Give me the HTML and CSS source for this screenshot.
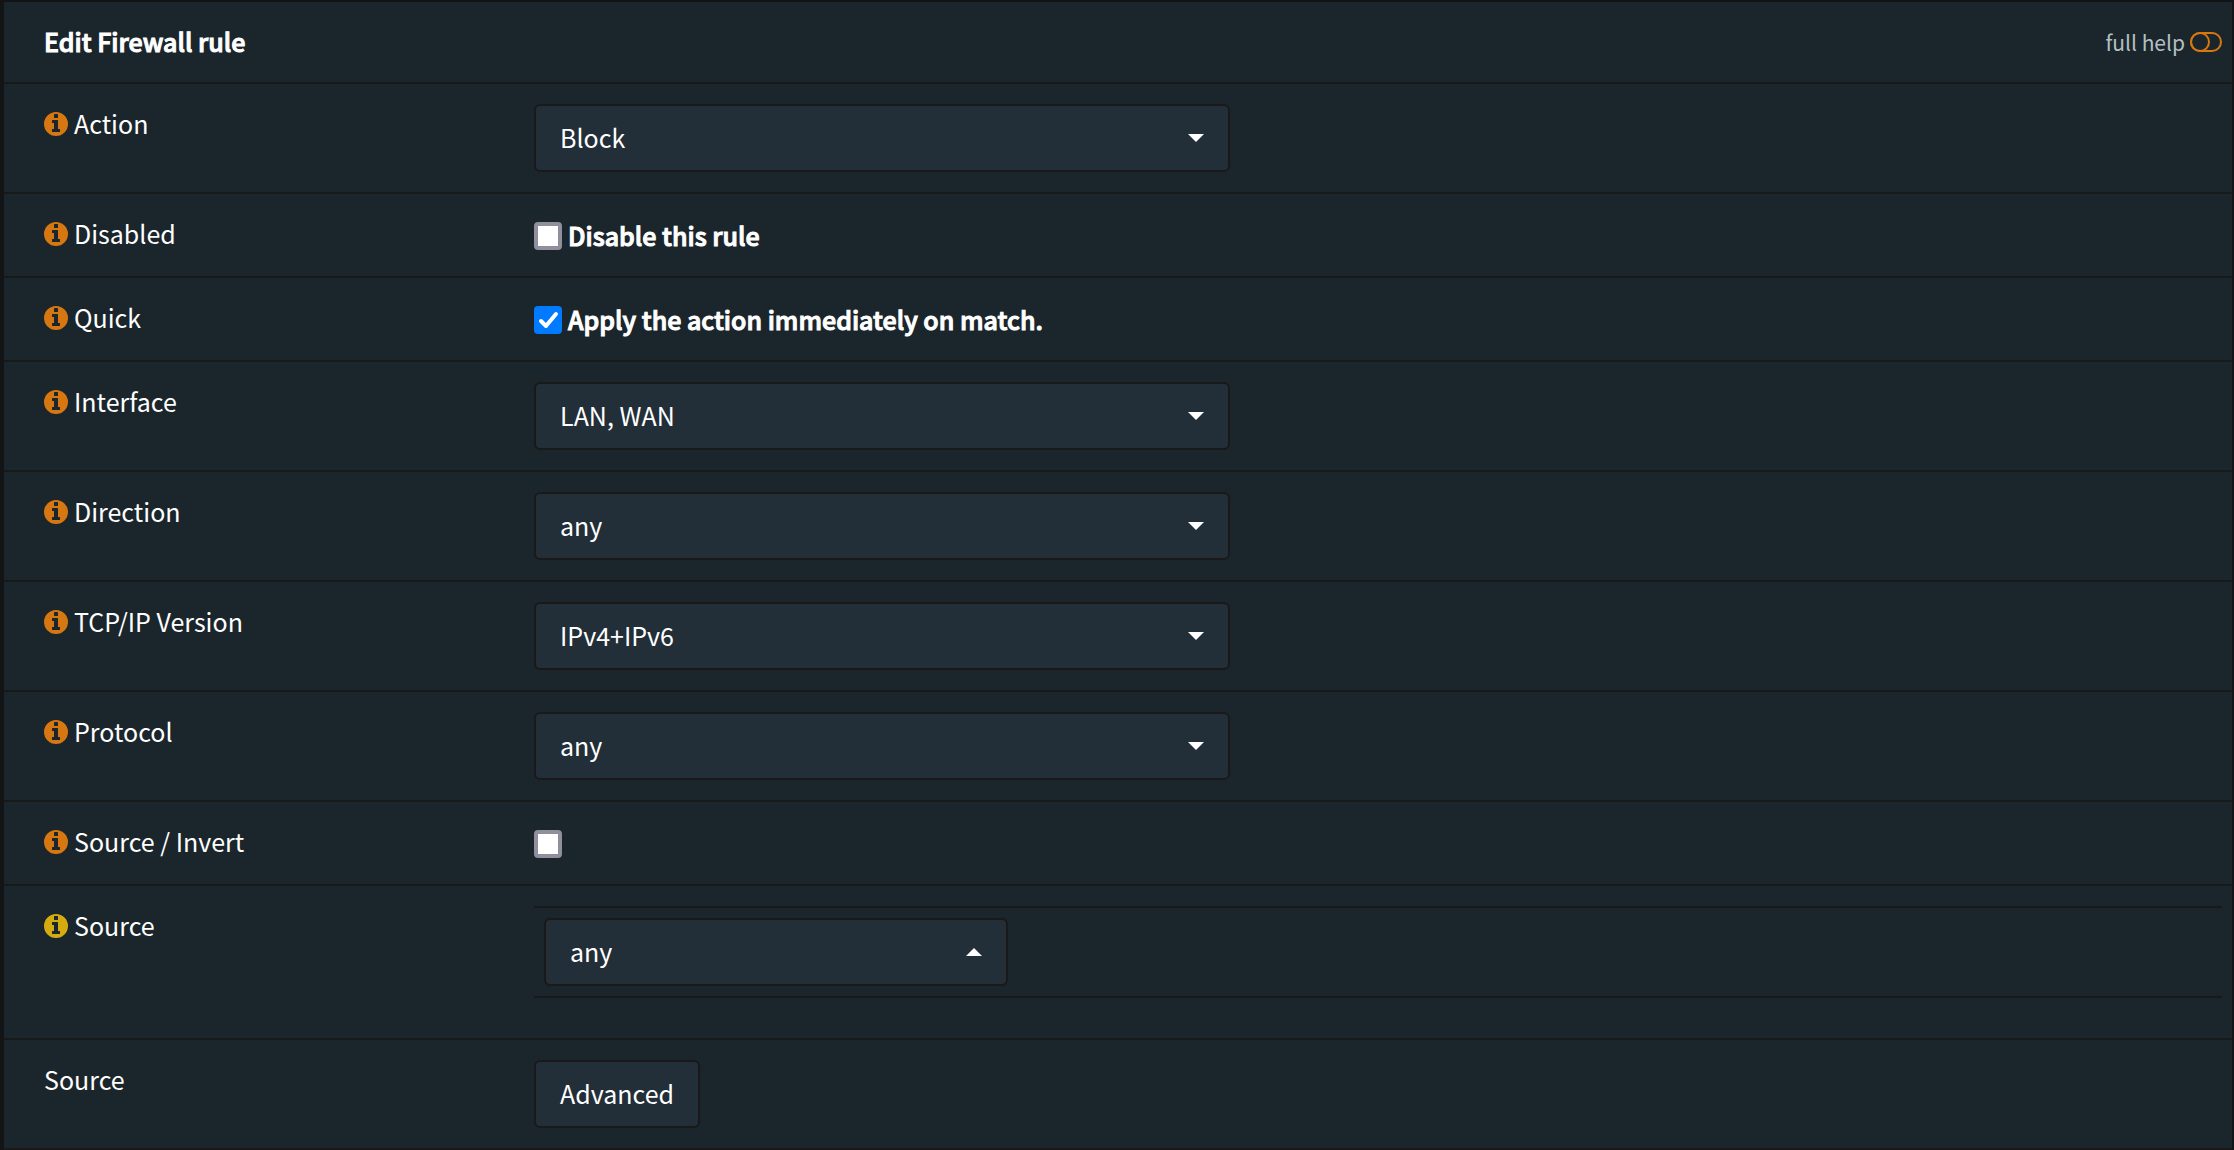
FILE: index.html
```html
<!DOCTYPE html>
<html lang="en">
<head>
<meta charset="utf-8">
<meta name="viewport" content="width=device-width, initial-scale=1">
<title>Edit Firewall rule</title>
<link rel="stylesheet" href="styles.css">
</head>
<body>
<svg class="sprite" aria-hidden="true">
  <symbol id="info" viewBox="0 0 24 24">
    <path fill-rule="evenodd" d="M12 0a12 12 0 1 1 0 24a12 12 0 0 1 0-24zM10.500 2h3q.5 0 .5.500v3q0 .5-.5.500h-3q-.5 0-.5-.500v-3q0-.5.5-.500zM8.500 8h5q.5 0 .5.500v8.500h1.500q.5 0 .5.500v2q0 .5-.5.500h-7q-.5 0-.5-.500v-2q0-.5.5-.500h1.500v-6h-1.500q-.5 0-.5-.500v-2q0-.5.5-.500z"/>
  </symbol>
</svg>
<form class="rule">
  <header class="row head">
    <h1 class="title">Edit Firewall rule</h1>
    <button class="help" type="button">full help
      <svg class="toggle" viewBox="0 0 32 20" aria-hidden="true"><rect x="1" y="1" width="30" height="18" rx="9"/><circle cx="10" cy="10" r="9"/></svg>
    </button>
  </header>
  <div class="row">
    <label class="name" for="action"><svg class="info"><use href="#info"/></svg>Action</label>
    <div class="field"><span class="select"><select id="action"><option>Block</option></select></span></div>
  </div>
  <div class="row">
    <span class="name"><svg class="info"><use href="#info"/></svg>Disabled</span>
    <div class="field"><label class="check"><input type="checkbox"><span class="check-text">Disable this rule</span></label></div>
  </div>
  <div class="row">
    <span class="name"><svg class="info"><use href="#info"/></svg>Quick</span>
    <div class="field"><label class="check"><input type="checkbox" checked><span class="check-text">Apply the action immediately on match.</span></label></div>
  </div>
  <div class="row">
    <label class="name" for="interface"><svg class="info"><use href="#info"/></svg>Interface</label>
    <div class="field"><span class="select"><select id="interface"><option>LAN, WAN</option></select></span></div>
  </div>
  <div class="row">
    <label class="name" for="direction"><svg class="info"><use href="#info"/></svg>Direction</label>
    <div class="field"><span class="select"><select id="direction"><option>any</option></select></span></div>
  </div>
  <div class="row">
    <label class="name" for="version"><svg class="info"><use href="#info"/></svg>TCP/IP Version</label>
    <div class="field"><span class="select"><select id="version"><option>IPv4+IPv6</option></select></span></div>
  </div>
  <div class="row">
    <label class="name" for="protocol"><svg class="info"><use href="#info"/></svg>Protocol</label>
    <div class="field"><span class="select"><select id="protocol"><option>any</option></select></span></div>
  </div>
  <div class="row">
    <label class="name" for="invert"><svg class="info"><use href="#info"/></svg>Source / Invert</label>
    <div class="field"><span class="check"><input type="checkbox" id="invert"></span></div>
  </div>
  <div class="row">
    <label class="name" for="source"><svg class="info info-active"><use href="#info"/></svg>Source</label>
    <div class="field"><div class="nested"><span class="select select-short select-up"><select id="source"><option>any</option></select></span></div></div>
  </div>
  <div class="row">
    <span class="name">Source</span>
    <div class="field"><button class="btn" type="button">Advanced</button></div>
  </div>
</form>
</body>
</html>
```

FILE: styles.css
```css
:root {
  --panel: #1b262c;
  --control: #222e38;
  --line: #191919;
  --accent: #d67711;
}

* {
  box-sizing: border-box;
}

body {
  margin: 0;
  background: var(--panel);
  color: #fff;
  font: 400 25px/38px "Noto Sans CJK JP", "Noto Sans", sans-serif;
}

.sprite {
  display: none;
}

.rule {
  border: solid #121416;
  border-width: 2px 2px 0 4px;
}

.row {
  display: grid;
  grid-template-columns: 490px 1fr;
  align-items: start;
  padding: 20px 10px 20px 40px;
  border-bottom: 2px solid var(--line);
}

.head {
  display: flex;
  justify-content: space-between;
}

.title,
.check-text {
  margin: 0;
  font-size: 25px;
  font-weight: 500;
  -webkit-text-stroke: 1px;
}

.help {
  display: flex;
  align-items: center;
  gap: 5px;
  padding: 0;
  border: 0;
  background: none;
  color: #b3bfc1;
  font: inherit;
  font-size: 21px;
  line-height: 40px;
}

.toggle {
  width: 32px;
  height: 20px;
  fill: none;
  stroke: var(--accent);
  stroke-width: 2;
}

.name {
  display: flex;
  align-items: center;
  gap: 6px;
}

.info {
  width: 24px;
  height: 24px;
  margin-top: 2px;
  fill: var(--accent);
}

.info-active {
  fill: #d5ac10;
}

.select {
  display: grid;
  align-items: center;
  max-width: 696px;
}

.select-short {
  max-width: 464px;
}

.select select,
.select::after {
  grid-area: 1 / 1;
}

.select::after {
  content: "";
  justify-self: end;
  margin-right: 26px;
  border: solid transparent;
  border-width: 8px 8px 0;
  border-top-color: #fff;
  pointer-events: none;
}

.select-up::after {
  border-width: 0 8px 8px;
  border-bottom-color: #fff;
}

.select select,
.btn {
  display: block;
  height: 68px;
  padding: 0 24px 2px;
  border: 2px solid var(--line);
  border-radius: 6px;
  background: var(--control);
  color: inherit;
  font: inherit;
  appearance: none;
}

.check {
  display: flex;
  align-items: start;
  gap: 6px;
  padding-top: 2px;
}

.check input {
  width: 28px;
  height: 28px;
  margin: 6px 0;
  border: 4px solid #8f8f9d;
  border-radius: 4px;
  background: #fff;
  appearance: none;
}

.check input:checked {
  border: 0;
  background: #007aff url("data:image/svg+xml,%3Csvg xmlns='http://www.w3.org/2000/svg' viewBox='0 0 28 28'%3E%3Cpath d='M7 15l5 5 10-12' fill='none' stroke='white' stroke-width='4' stroke-linecap='round' stroke-linejoin='round'/%3E%3C/svg%3E");
}

.nested {
  margin-bottom: 20px;
  padding: 10px;
  border: solid var(--line);
  border-width: 2px 0;
}
```
